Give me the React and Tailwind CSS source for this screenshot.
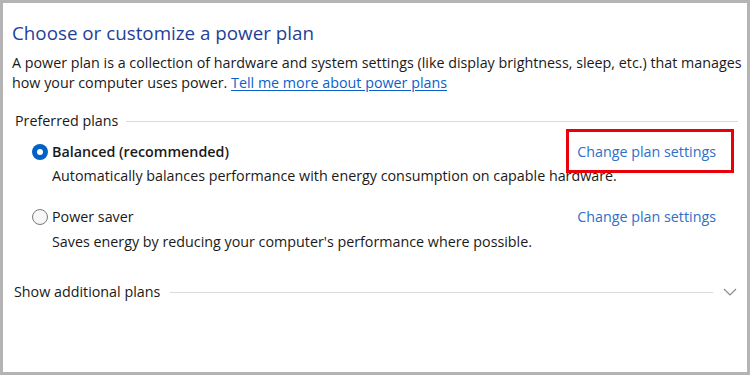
import React from 'react';

const font = { fontFamily: '"Open Sans", "Noto Sans", Arial, sans-serif' };

const Radio = ({ checked }) =>
  checked ? (
    <span className="flex h-[16px] w-[16px] shrink-0 items-center justify-center rounded-full bg-[#0062c4]">
      <span className="h-[6px] w-[6px] rounded-full bg-white" />
    </span>
  ) : (
    <span className="h-[16px] w-[16px] shrink-0 rounded-full border border-[#7a7a7a] bg-[#f6f6f6]" />
  );

const Plan = ({ name, desc, checked, highlight, descGap }) => (
  <div>
    <div className="flex items-center justify-between pl-[20px] pr-[31px]">
      <div className="flex items-center gap-[4px]">
        <Radio checked={checked} />
        <span className={checked ? 'font-semibold text-[#1a1a1a]' : 'text-[#1a1a1a]'}>{name}</span>
      </div>
      <span className="relative text-[#2f6fc8]">
        Change plan settings
        {highlight && (
          <span className="pointer-events-none absolute -left-[11px] -right-[18px] -top-[13px] -bottom-[11px] border-[3px] border-[#e8000b]" />
        )}
      </span>
    </div>
    <p className={`pl-[40px] text-[#1a1a1a] ${descGap}`}>{desc}</p>
  </div>
);

export default function App() {
  return (
    <div
      className="h-[375px] w-[750px] overflow-hidden border-[3px] border-[#b4b4b4] bg-white text-[14.3px] leading-[20px]"
      style={font}
    >
      <div className="pl-[9px] pt-[16px]">
        <h1 className="text-[18.8px] leading-[28px] text-[#1f3f99]">Choose or customize a power plan</h1>
        <p className="mt-[6px] text-[#1a1a1a]">
          A power plan is a collection of hardware and system settings (like display brightness, sleep, etc.) that manages
          how your computer uses power.{' '}
          <a className="text-[#0a5fcc] underline underline-offset-2">Tell me more about power plans</a>
        </p>

        <div className="mt-[18px] flex items-center gap-[8px] pl-[3px] pr-[9px]">
          <span className="text-[#1a1a1a]">Preferred plans</span>
          <span className="h-px flex-1 bg-[#d9d9d9]" />
        </div>

        <div className="mt-[11px]">
          <Plan
            checked
            highlight
            name="Balanced (recommended)"
            desc="Automatically balances performance with energy consumption on capable hardware."
            descGap="mt-[4px]"
          />
        </div>
        <div className="mt-[21px]">
          <Plan
            name="Power saver"
            desc="Saves energy by reducing your computer's performance where possible."
            descGap="mt-[5px]"
          />
        </div>

        <div className="mt-[30px] flex items-center pl-[2px] pr-[10px]">
          <span className="text-[#1a1a1a]">Show additional plans</span>
          <span className="ml-[10px] h-px flex-1 bg-[#d9d9d9]" />
          <svg className="ml-[10px]" width="14" height="8" viewBox="0 0 14 8" fill="none">
            <path d="M1 1l6 6 6-6" stroke="#8a8a8a" strokeWidth="1.2" />
          </svg>
        </div>
      </div>
    </div>
  );
}
